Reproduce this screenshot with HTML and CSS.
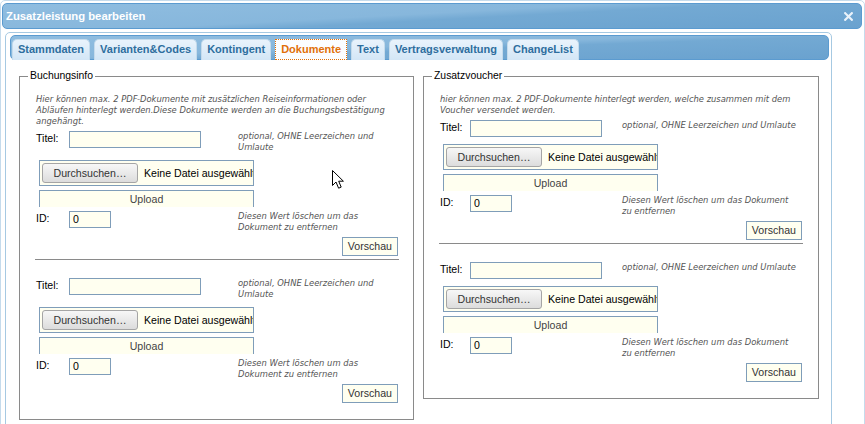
FILE: index.html
```html
<!DOCTYPE html>
<html lang="de">
<head>
<meta charset="utf-8">
<title>Zusatzleistung bearbeiten</title>
<link rel="stylesheet" href="styles.css">
</head>
<body>
<div class="dialog">
  <div class="titlebar">
    <span class="title">Zusatzleistung bearbeiten</span>
    <svg class="close" width="9" height="9" viewBox="0 0 9 9"><path d="M1.2 1.2 L7.8 7.8 M7.8 1.2 L1.2 7.8" stroke="#e9f2fa" stroke-width="2.2" stroke-linecap="square"/></svg>
  </div>
  <div class="content">
    <div class="tabs">
      <ul class="tabnav">
        <li class="tab">Stammdaten</li>
        <li class="tab">Varianten&amp;Codes</li>
        <li class="tab">Kontingent</li>
        <li class="tab tab-active">Dokumente</li>
        <li class="tab">Text</li>
        <li class="tab">Vertragsverwaltung</li>
        <li class="tab">ChangeList</li>
      </ul>
      <div class="panel">
        <fieldset class="group group-left">
          <legend>Buchungsinfo</legend>
          <div class="group-body">
            <p class="hint intro">Hier können max. 2 PDF-Dokumente mit zusätzlichen Reiseinformationen oder Abläufen hinterlegt werden.Diese Dokumente werden an die Buchungsbestätigung angehängt.</p>
            <div class="doc">
              <div class="row"><span class="label">Titel:</span><span class="field field-title"></span><span class="hint">optional, OHNE Leerzeichen und Umlaute</span></div>
              <div class="filebox"><span class="browse">Durchsuchen…</span><span class="nofile">Keine Datei ausgewählt</span></div>
              <div class="upload">Upload</div>
              <div class="row"><span class="label">ID:</span><span class="field field-id">0</span><span class="hint">Diesen Wert löschen um das Dokument zu entfernen</span></div>
              <div class="preview">Vorschau</div>
            </div>
            <hr class="sep">
            <div class="doc">
              <div class="row"><span class="label">Titel:</span><span class="field field-title"></span><span class="hint">optional, OHNE Leerzeichen und Umlaute</span></div>
              <div class="filebox"><span class="browse">Durchsuchen…</span><span class="nofile">Keine Datei ausgewählt</span></div>
              <div class="upload">Upload</div>
              <div class="row"><span class="label">ID:</span><span class="field field-id">0</span><span class="hint">Diesen Wert löschen um das Dokument zu entfernen</span></div>
              <div class="preview">Vorschau</div>
            </div>
          </div>
        </fieldset>
        <fieldset class="group group-right">
          <legend>Zusatzvoucher</legend>
          <div class="group-body">
            <p class="hint intro">hier können max. 2 PDF-Dokumente hinterlegt werden, welche zusammen mit dem Voucher versendet werden.</p>
            <div class="doc">
              <div class="row"><span class="label">Titel:</span><span class="field field-title"></span><span class="hint">optional, OHNE Leerzeichen und Umlaute</span></div>
              <div class="filebox"><span class="browse">Durchsuchen…</span><span class="nofile">Keine Datei ausgewählt</span></div>
              <div class="upload">Upload</div>
              <div class="row"><span class="label">ID:</span><span class="field field-id">0</span><span class="hint">Diesen Wert löschen um das Dokument zu entfernen</span></div>
              <div class="preview">Vorschau</div>
            </div>
            <hr class="sep">
            <div class="doc">
              <div class="row"><span class="label">Titel:</span><span class="field field-title"></span><span class="hint">optional, OHNE Leerzeichen und Umlaute</span></div>
              <div class="filebox"><span class="browse">Durchsuchen…</span><span class="nofile">Keine Datei ausgewählt</span></div>
              <div class="upload">Upload</div>
              <div class="row"><span class="label">ID:</span><span class="field field-id">0</span><span class="hint">Diesen Wert löschen um das Dokument zu entfernen</span></div>
              <div class="preview">Vorschau</div>
            </div>
          </div>
        </fieldset>
      </div>
    </div>
  </div>
  <svg class="cursor" width="13" height="20" viewBox="0 0 13 20"><path d="M0.5 0.5 L0.5 15.5 L4 12 L6.6 18.2 L9.2 17.1 L6.7 11.2 L11.4 11.2 Z" fill="#fff" stroke="#000" stroke-width="1" stroke-linejoin="miter"/></svg>
</div>
</body>
</html>
```
FILE: styles.css
```css
html, body {
  margin: 0;
  padding: 0;
  height: 424px;
  overflow: hidden;
  background: #fff;
}

body {
  font-family: "Liberation Sans", Arial, sans-serif;
  font-size: 10.6px;
  color: #000;
}

.dialog {
  position: relative;
  box-sizing: border-box;
  width: 865px;
  height: 440px;
  border: 1px solid #c5dbec;
  border-radius: 5px;
  padding: 2px 2px 0 1px;
  background: #fff;
}

.titlebar {
  display: flex;
  align-items: center;
  justify-content: space-between;
  box-sizing: border-box;
  height: 26px;
  padding: 0 8px 0 3px;
  border: 1px solid #5b9bd0;
  border-radius: 5px;
  background: linear-gradient(177deg, #8fbde0 0%, #87b7dc 46%, #73a9d3 56%, #6aa2cf 100%);
}

.title {
  color: #fff;
  font-weight: bold;
  font-size: 11.3px;
}

.close {
  display: block;
}

.content {
  padding: 3px 0 0 3px;
}

.tabs {
  box-sizing: border-box;
  width: 827px;
  height: 410px;
  border: 1px solid #a6c9e2;
  border-radius: 5px;
  padding: 2px 1px 0 4px;
  background: #fff;
}

.tabnav {
  display: flex;
  align-items: flex-end;
  box-sizing: border-box;
  width: 819px;
  height: 25px;
  margin: 0;
  padding: 0 0 0 1px;
  list-style: none;
  border: 1px solid #5b9bd0;
  border-radius: 5px;
  background: linear-gradient(178deg, #8fbde0 0%, #87b7dc 46%, #73a9d3 56%, #6aa2cf 100%);
}

.tab {
  box-sizing: border-box;
  height: 21px;
  margin: 0 4px -1px 0;
  padding: 0 5px;
  border: 1px solid #c5dbec;
  border-bottom: 0;
  border-radius: 5px 5px 0 0;
  background: linear-gradient(#e9f3fc, #d3e6f6);
  color: #2e6e9e;
  font-weight: bold;
  font-size: 11px;
  line-height: 19px;
  white-space: nowrap;
}

.tab-active {
  border: 1px dotted #e17009;
  border-radius: 0;
  background: #fbfdff;
  color: #e17009;
}

.panel {
  display: flex;
  align-items: flex-start;
  gap: 9px;
  padding: 10px 0 0 9px;
}

.group {
  box-sizing: border-box;
  margin: 0;
  border: 1px solid #8a8a8a;
  padding: 12px 14px 16px 8px;
  min-width: 0;
}

.group-left {
  width: 395px;
}

.group-right {
  width: 396px;
  padding-right: 15px;
}

.group legend {
  padding: 0 2px;
  font-size: 10.4px;
  line-height: 12px;
  color: #000;
}

.group-body {
  padding-left: 8px;
}

.hint {
  font-family: "DejaVu Sans", Verdana, sans-serif;
  font-style: italic;
  font-size: 8.4px;
  line-height: 11px;
  color: #555;
}

.intro {
  margin: 0 0 4px;
}

.doc {
  display: flex;
  flex-direction: column;
  align-items: flex-start;
}

.row {
  display: grid;
  align-items: start;
  width: 100%;
}

.group-left .row {
  grid-template-columns: 33px 169px 161px;
}

.group-right .row {
  grid-template-columns: 30px 152px 176px;
}

.label {
  padding-top: 1px;
  line-height: 12px;
}

.field {
  box-sizing: border-box;
  height: 17px;
  border: 1px solid #7f9db9;
  background: #fffff0;
  padding: 0 3px;
  line-height: 15px;
}

.field-title {
  width: 132px;
}

.field-id {
  width: 42px;
}

.filebox {
  display: flex;
  align-items: center;
  box-sizing: border-box;
  width: 215px;
  height: 26px;
  margin: 7px 0 0 3px;
  padding: 2px;
  border: 1px solid #7f9db9;
  background: #fffff0;
  overflow: hidden;
  white-space: nowrap;
}

.browse {
  flex: none;
  box-sizing: border-box;
  width: 96px;
  height: 20px;
  border: 1px solid #a5a5a5;
  border-radius: 3px;
  background: linear-gradient(#f7f7f7, #dcdcdc);
  color: #333;
  text-align: center;
  line-height: 18px;
}

.nofile {
  margin-left: 6px;
  color: #000;
}

.upload {
  box-sizing: border-box;
  width: 215px;
  height: 17px;
  margin: 4px 0 0 3px;
  border: 1px solid #7f9db9;
  border-bottom: 0;
  background: #fffff0;
  color: #444;
  text-align: center;
  line-height: 16px;
}

.upload + .row {
  margin-top: 4px;
}

.preview {
  align-self: flex-end;
  box-sizing: border-box;
  height: 19px;
  margin: 4px 1px 0 0;
  padding: 0 5px;
  border: 1px solid #7f9db9;
  background: #fffff0;
  color: #333;
  line-height: 17px;
}

.sep {
  box-sizing: border-box;
  width: 364px;
  height: 0;
  margin: 3px 0 18px -1px;
  border: 0;
  border-top: 1px solid #8a8a8a;
}

.cursor {
  position: absolute;
  left: 331px;
  top: 169px;
}
```
